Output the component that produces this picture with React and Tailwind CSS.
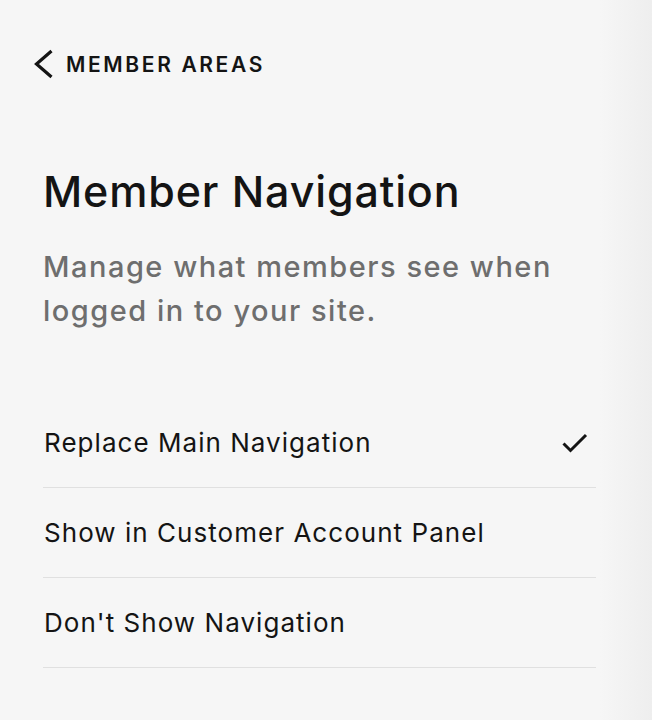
import React, { useState } from "react";

const options = [
  "Replace Main Navigation",
  "Show in Customer Account Panel",
  "Don't Show Navigation",
];

const App = () => {
  const [selected, setSelected] = useState(0);

  return (
    <div
      className="min-h-screen w-full bg-[linear-gradient(to_right,#f6f6f6_0%,#f6f6f6_92%,#eeeeee_100%)] text-[#141414]"
      style={{ fontFamily: "Inter, 'Noto Sans', sans-serif" }}
    >
      {/* Back link */}
      <div className="pt-[49px] pl-[32px]">
        <button className="flex items-center h-[30px] gap-[12px]">
          <svg
            width="22"
            height="30"
            viewBox="0 0 22 30"
            fill="none"
            stroke="#141414"
            strokeWidth="3.2"
          >
            <path d="M19.5 2L4.5 15L19.5 28" />
          </svg>
          <span className="text-[21px] font-semibold tracking-[0.125em] leading-none">
            MEMBER AREAS
          </span>
        </button>
      </div>

      <div className="pl-[43px] pr-[56px]">
        {/* Title */}
        <h1 className="mt-[87px] text-[43px] leading-[50px] font-medium tracking-[0.02em]">
          Member Navigation
        </h1>
        <p className="mt-[29px] text-[29px] leading-[44px] font-medium tracking-[0.052em] text-[#6e6e6e]">
          Manage what members see when
          <br />
          logged in to your site.
        </p>

        {/* Options */}
        <div className="mt-[65px]">
          {options.map((label, i) => (
            <div
              key={label}
              onClick={() => setSelected(i)}
              className="flex items-center justify-between h-[90px] border-b border-[#e0e0e0] pl-[1px] cursor-pointer"
            >
              <span className="text-[26px] leading-[32px] tracking-[0.04em]">
                {label}
              </span>
              {selected === i && (
                <svg
                  width="26"
                  height="22"
                  viewBox="0 0 26 22"
                  fill="none"
                  stroke="#141414"
                  strokeWidth="3"
                  className="mr-[8px]"
                >
                  <path d="M1.5 11.5L8.5 18.5L24 3" />
                </svg>
              )}
            </div>
          ))}
        </div>
      </div>
    </div>
  );
};

export default App;
